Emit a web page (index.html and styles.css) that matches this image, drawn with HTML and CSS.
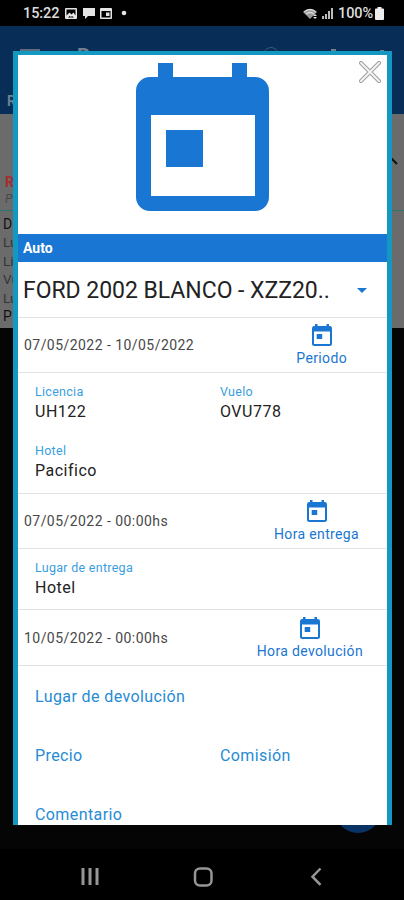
FILE: index.html
```
<!DOCTYPE html>
<html lang="es">
<head>
<meta charset="utf-8">
<title>Auto</title>
<link rel="stylesheet" href="styles.css">
</head>
<body>
<svg width="0" height="0" class="defs"><symbol id="event" viewBox="0 0 20 22"><path fill-rule="evenodd" d="M3 0h2.500v2h9V0H17v2h.7A2.300 2.300 0 0 1 20 4.300V19.500A2.300 2.300 0 0 1 17.700 22H2.300A2.300 2.300 0 0 1 0 19.500V4.300A2.300 2.300 0 0 1 2.300 2H3zM2 7.500V20h16V7.500zM4.700 10h5.500v5H4.700z"/></symbol></svg>
<div class="phone">
  <header class="status">
    <span class="time">15:22</span>
    <svg class="notices" width="64" height="12" viewBox="0 0 64 12" fill="#e4e4e4">
      <path fill-rule="evenodd" d="M1 0h10a1 1 0 0 1 1 1v9a1 1 0 0 1-1 1H1a1 1 0 0 1-1-1V1a1 1 0 0 1 1-1zM1.500 1.500v6l3-3 2 2 2-2 2 3v-6zM3 9.500h6l-2-1.500-1 1-1.500-1z"/>
      <path d="M18 0h12v8h-7l-3 3V8h-2z"/>
      <path fill-rule="evenodd" d="M36 0h10a1 1 0 0 1 1 1v9a1 1 0 0 1-1 1H36a1 1 0 0 1-1-1V1a1 1 0 0 1 1-1zM36.500 3v6.500h9V3zM41 4.500h3.500V8H41z"/>
      <circle cx="59" cy="5" r="2.300"/>
    </svg>
    <svg class="signal" width="31" height="12" viewBox="0 0 31 12">
      <path d="M0 4Q7-2 14 4L7 11z" fill="#999"/><path d="M1 4Q7-1 13 4M3 6q4-3 8 0" fill="none" stroke="#ddd" stroke-width="1.300"/>
      <path d="M10 8l2-2 2 2zM10 9l2 2 2-2z" fill="#ddd"/>
      <path d="M19 11V8h2v3zM22 11V6h2v5zM25 11V3h2v8zM28 11V0h2v11z" fill="#bbb"/>
    </svg>
    <span class="percent">100%</span>
    <svg width="9" height="13" viewBox="0 0 9 13"><path d="M2.500 0h4v1.500H8q1 0 1 1V12q0 1-1 1H1q-1 0-1-1V2.500q0-1 1-1h1.500z" fill="#eee"/></svg>
  </header>
  <main class="app">
    <div class="toolbar">
      <div class="tools"><i class="menu"></i><b>R</b>
        <svg class="actions" width="125" height="20" viewBox="0 0 125 20"><circle cx="8" cy="9" r="7.500" fill="none" stroke="#45586c"/><path d="M68 3h5v12h-5zM117 4h4v4h-4z" fill="#71808e"/></svg>
      </div>
      <b class="tab">R</b>
    </div>
    <div class="list">
      <div class="filter"><svg width="9" height="9" viewBox="0 0 9 9"><path d="M1 1l6 6" stroke="#111" stroke-width="2"/></svg></div>
      <div class="group"><b>R</b><em>P</em></div>
      <div class="entries"><span class="strong">D</span><span>Lu</span><span>Li</span><span>Vu</span><span>Lu</span><span class="strong">P</span></div>
    </div>
    <div class="fab"></div>
    <section class="dialog">
      <div class="hero">
        <svg width="133" height="148" viewBox="0 0 133 148" fill="#1976d2"><path fill-rule="evenodd" d="M22 0h15v14h59V0h15v14h8a14 14 0 0 1 14 14v106a14 14 0 0 1-14 14H14a14 14 0 0 1-14-14V28a14 14 0 0 1 14-14h8zM15 52v81h104V52zM30 67h37v37H30z"/></svg>
        <svg class="close" width="22" height="22" viewBox="0 0 22 22"><path d="M2 2l18 18M20 2L2 20" stroke="#a0a0a0" stroke-width="4" stroke-linecap="round"/><path d="M2 2l18 18M20 2L2 20" stroke="#f4f4f4" stroke-width="2" stroke-linecap="round"/></svg>
      </div>
      <h1>Auto</h1>
      <div class="select"><span>FORD 2002 BLANCO - XZZ20..</span><i></i></div>
      <div class="row"><span class="date">07/05/2022 - 10/05/2022</span><div class="pick period"><svg width="20" height="22"><use href="#event"/></svg><span>Periodo</span></div></div>
      <div class="fields trip">
        <div><label>Licencia</label><p>UH122</p></div><div><label>Vuelo</label><p>OVU778</p></div>
        <div><label>Hotel</label><p>Pacifico</p></div>
      </div>
      <div class="row"><span class="date">07/05/2022 - 00:00hs</span><div class="pick delivery"><svg width="20" height="22"><use href="#event"/></svg><span>Hora entrega</span></div></div>
      <div class="fields place"><div><label>Lugar de entrega</label><p>Hotel</p></div></div>
      <div class="row last"><span class="date">10/05/2022 - 00:00hs</span><div class="pick return"><svg width="20" height="22"><use href="#event"/></svg><span>Hora devolución</span></div></div>
      <div class="empty"><span class="wide">Lugar de devolución</span><span>Precio</span><span>Comisión</span><span class="wide">Comentario</span></div>
    </section>
  </main>
  <nav>
    <svg width="404" height="51" viewBox="0 0 404 51" fill="none" stroke="#969696" stroke-width="2.500"><path d="M83 19v17M90 19v17M97 19v17" stroke-width="3"/><rect x="195" y="19.500" width="16.500" height="17" rx="5"/><path d="M320.500 19.500l-8 8.200 8 8.200"/></svg>
  </nav>
</div>
</body>
</html>
```

FILE: styles.css
```
* { box-sizing: border-box; margin: 0; }
body { background: #000; font-family: Roboto, sans-serif; color: #222; }
.defs { position: absolute; }
.phone { width: 404px; height: 900px; overflow: hidden; display: flex; flex-direction: column; }
.status { height: 26px; flex: none; display: flex; align-items: center; padding: 1px 20px 0 23px; color: #ddd; font-size: 14.5px; font-weight: 500; }
.time { width: 42px; letter-spacing: -.1px; }
.notices { margin-right: auto; }
.signal { margin-right: 4px; }
.percent { width: 37px; letter-spacing: -.1px; }
.app { position: relative; height: 823px; flex: none; background: #050505; overflow: hidden; }
.toolbar { height: 88px; background: #082e57; color: #71808e; display: flex; flex-direction: column; justify-content: space-between; padding: 17px 16px 5px 7px; }
.tools { height: 24px; display: flex; align-items: center; padding: 2px 0 0 13px; font-size: 20px; }
.menu { width: 20px; height: 14px; border-top: 3px solid #5d6d7c; border-bottom: 3px solid #5d6d7c; margin-right: 37px; }
.actions { margin-left: auto; }
.tab { font-size: 14px; }
.list { height: 214px; background: #6b6b6b; }
.filter { height: 55px; padding-top: 43px; display: flex; justify-content: flex-end; padding-right: 5px; }
.group { height: 42px; border-bottom: 1px solid #2b7771; padding: 4px 5px; color: #a82a32; display: flex; flex-direction: column; font-size: 14px; line-height: 18px; }
.group em { color: #484848; font-size: 12px; line-height: 16px; }
.entries { padding: 4px 3px; display: flex; flex-direction: column; font-size: 13.5px; line-height: 18.400px; color: #343434; }
.strong { color: #111; font-size: 14px; }
.fab { position: absolute; left: 335px; top: 761px; width: 46px; height: 46px; border-radius: 50%; background: #0a3365; }
.dialog { position: absolute; left: 13px; top: 25px; width: 379px; height: 774px; border: solid #1398c2; border-width: 4px 5px 0; background: #fff; overflow: hidden; }
.hero { height: 179px; padding: 8px 0 0 118px; position: relative; }
.close { position: absolute; right: 6px; top: 6px; }
h1 { height: 28px; background: #1976d2; color: #fff; font-size: 14px; font-weight: 700; line-height: 29px; padding-left: 5px; }
.select { height: 56px; display: flex; align-items: center; justify-content: space-between; padding: 2px 20px 0 5px; font-size: 23px; letter-spacing: -.04px; border-bottom: 1px solid #e3e3e3; }
.select i { border: 5px solid transparent; border-top-color: #1976d2; border-bottom: 0; }
.row { height: 55px; border-bottom: 1px solid #e3e3e3; display: flex; align-items: center; justify-content: space-between; padding-left: 6px; }
.last { height: 56px; padding-top: 1px; }
.date { font-size: 14px; letter-spacing: .45px; color: #484848; }
.pick { color: #1976d2; fill: #1976d2; display: flex; flex-direction: column; align-items: center; font-size: 14px; line-height: 18px; gap: 3px; letter-spacing: .35px; }
.period { margin-right: 40px; }
.delivery { margin-right: 28px; }
.return { margin-right: 24px; }
.fields { padding: 11px 0 0 17px; display: grid; grid-template-columns: 185px 1fr; grid-auto-rows: 59px; border-bottom: 1px solid #e3e3e3; }
.trip { height: 121px; }
.place { height: 61px; }
.fields label { display: block; font-size: 12.500px; line-height: 16px; letter-spacing: .28px; color: #399ee0; }
.fields p { font-size: 16px; line-height: 24px; letter-spacing: .5px; }
.empty { display: grid; grid-template-columns: 185px 1fr; grid-auto-rows: 59px; align-items: center; padding: 1px 0 0 17px; font-size: 16px; color: #268bd5; letter-spacing: .4px; }
.wide { grid-column: 1 / -1; }
nav { height: 51px; flex: none; background: #000; }
```
